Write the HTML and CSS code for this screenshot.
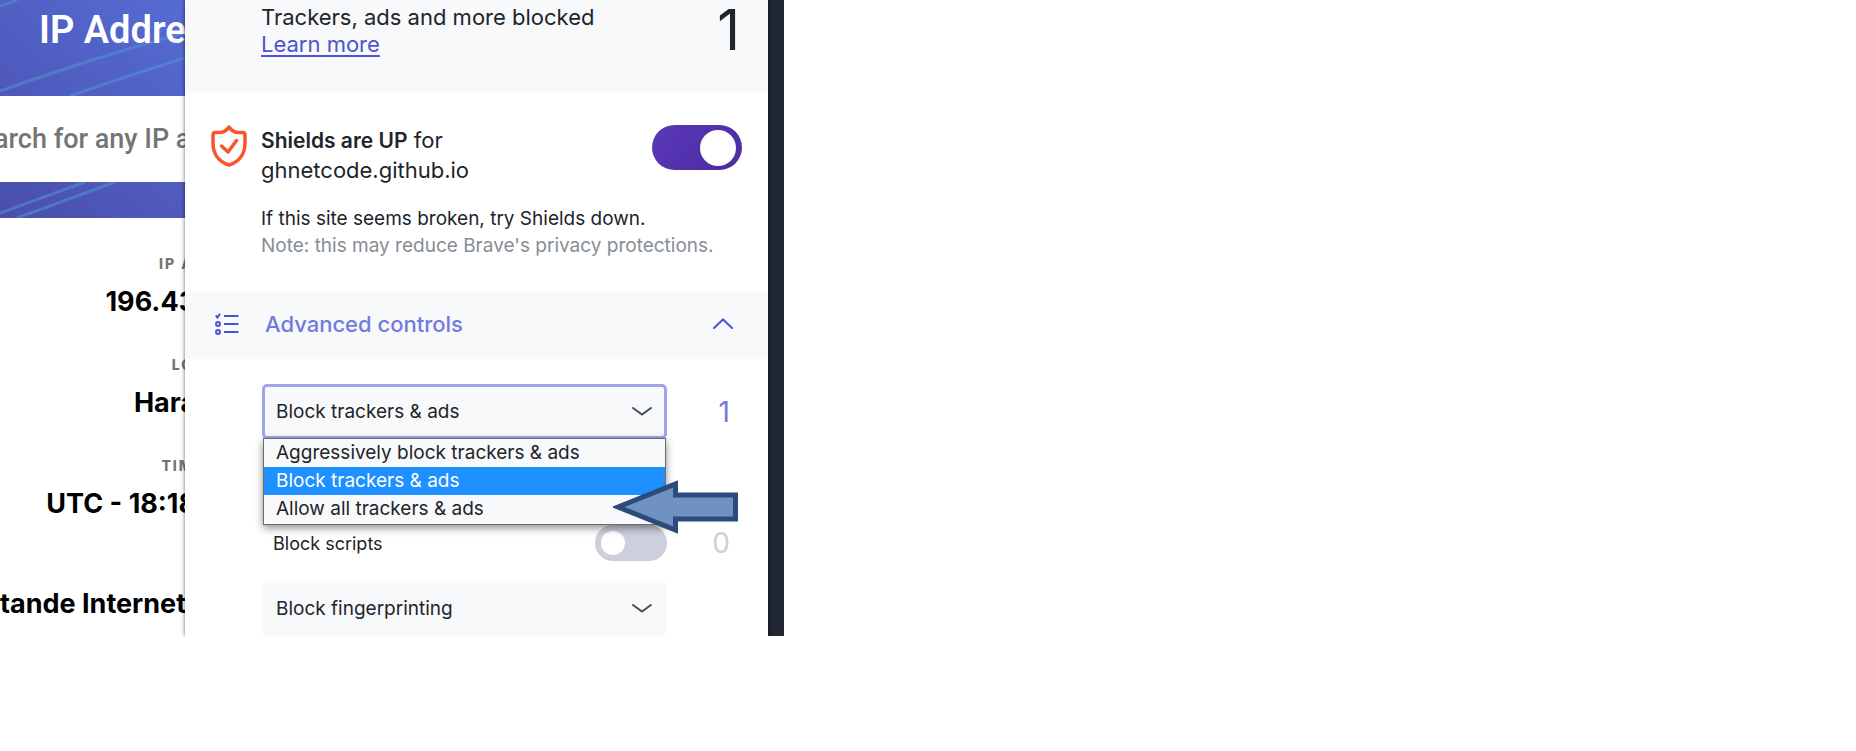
FILE: index.html
```html
<!DOCTYPE html>
<html lang="en">
<head>
<meta charset="utf-8">
<title>Shields</title>
<link rel="stylesheet" href="styles.css">
</head>
<body>
<div class="window">
  <main class="page">
    <header class="banner">
      <svg class="banner-lines" viewBox="0 0 185 218" preserveAspectRatio="none" aria-hidden="true">
        <path d="M0 6L17 0M0 91C60 70 120 50 185 33M70 96C110 82 150 69 185 58M0 213L85 182M17 218L115 182"/>
      </svg>
      <h1 class="banner-title">IP Addre</h1>
      <input class="search" type="text" placeholder="arch for any IP a" aria-label="IP search">
    </header>
    <dl class="facts">
      <div class="fact"><dt>IP A</dt><dd>196.43</dd></div>
      <div class="fact"><dt>LO</dt><dd>Hara</dd></div>
      <div class="fact"><dt>TIM</dt><dd>UTC - 18:18</dd></div>
      <div class="fact fact-plain"><dd>tande Internet</dd></div>
    </dl>
  </main>

  <aside class="panel">
    <section class="summary">
      <p class="summary-text">Trackers, ads and more blocked<br><a class="link" href="#">Learn more</a></p>
      <span class="total">1</span>
    </section>

    <section class="status">
      <svg class="shield" viewBox="0 0 36 42" aria-hidden="true">
        <path d="M18 2C16 5 12 7.500 8 7.500H4.500C3 7.500 2 8.500 2 10V18C2 29 8 37 18 40C28 37 34 29 34 18V10C34 8.500 33 7.500 31.500 7.500H28C24 7.500 20 5 18 2Z"/>
        <path d="M10.500 21L17 27L25.500 15.500"/>
      </svg>
      <label class="site" for="shields"><b>Shields are UP</b> for<br>ghnetcode.github.io</label>
      <input class="toggle toggle-large" id="shields" type="checkbox" role="switch" checked>
      <p class="hint">If this site seems broken, try Shields down.<br><span class="note">Note: this may reduce Brave's privacy protections.</span></p>
    </section>

    <button class="advanced" type="button" aria-expanded="true">
      <svg class="list-icon" viewBox="0 0 24 22" aria-hidden="true">
        <path d="M.8 2.500L2.500 4.500L5 .8M9 3H23.500M9 11H23.500M9 19H23.500"/>
        <circle cx="3" cy="11" r="2"/><circle cx="3" cy="19" r="2"/>
      </svg>
      <span class="advanced-label">Advanced controls</span>
      <svg class="collapse" viewBox="0 0 20 11" aria-hidden="true"><path d="M1 10L10 1.500L19 10"/></svg>
    </button>

    <section class="controls">
      <div class="field field-open">
        <select class="select" aria-label="Trackers and ads">
          <option>Block trackers &amp; ads</option>
        </select>
        <svg class="chevron" viewBox="0 0 20 9" aria-hidden="true"><path d="M1 1L10 7.500L19 1"/></svg>
        <ul class="menu" role="listbox" aria-label="Trackers and ads">
          <li class="option" role="option">Aggressively block trackers &amp; ads</li>
          <li class="option option-active" role="option" aria-selected="true">Block trackers &amp; ads</li>
          <li class="option" role="option">Allow all trackers &amp; ads</li>
        </ul>
        <svg class="arrow" viewBox="0 0 126 54" aria-hidden="true"><path d="M5 27L62.500 4V15H122.500V39H62.500V50Z"/></svg>
      </div>
      <span class="count">1</span>

      <div class="switch-row">
        <label for="scripts">Block scripts</label>
        <input class="toggle" id="scripts" type="checkbox" role="switch">
      </div>
      <span class="count count-off">0</span>

      <div class="field">
        <select class="select" aria-label="Fingerprinting">
          <option>Block fingerprinting</option>
        </select>
        <svg class="chevron" viewBox="0 0 20 9" aria-hidden="true"><path d="M1 1L10 7.500L19 1"/></svg>
      </div>
    </section>
  </aside>
</div>
</body>
</html>
```
FILE: styles.css
```css
* { box-sizing: border-box; }

body {
  margin: 0;
  background: #fff;
  color: #212529;
  font-family: Inter, "Open Sans", sans-serif;
}

h1, p, dl, dd, ul { margin: 0; padding: 0; }

.window {
  display: grid;
  grid-template-columns: 185fr 583fr 16px;
  max-width: 784px;
  overflow: hidden;
  background: #212733;
}

/* Page behind the panel */
.page {
  overflow: hidden;
  background: #fff;
  color: #000;
  font-family: Roboto, sans-serif;
}

.banner {
  position: relative;
  padding-bottom: 36px;
  background: linear-gradient(40deg, #4b4dac, #556dd4);
}

.banner-lines {
  position: absolute;
  inset: 0;
  width: 100%;
  height: 100%;
  fill: none;
  stroke: #4f9bd0;
  stroke-opacity: .5;
  stroke-width: 3;
}

.banner-title {
  position: relative;
  height: 96px;
  padding: 8px 0 0 39px;
  color: #fff;
  font-size: 38px;
  font-weight: 600;
  line-height: 44px;
  white-space: nowrap;
}

.search {
  position: relative;
  display: block;
  width: 100%;
  height: 86px;
  padding: 0;
  border: 0;
  background: #fff;
  font: 500 27px Roboto, sans-serif;
  text-indent: -6px;
}

.search::placeholder { color: #757575; opacity: 1; }

.facts {
  display: grid;
  gap: 37px;
  margin-right: -10px;
  padding-top: 36px;
}

.fact {
  display: grid;
  justify-content: end;
  justify-items: end;
  gap: 12px;
  white-space: nowrap;
}

.fact dt {
  padding-right: 2px;
  color: #757575;
  font: 800 14px/20px Inter, sans-serif;
  letter-spacing: 2px;
}

.fact dd {
  font: 700 27px/32px Inter, sans-serif;
}

.fact-plain { padding: 31px 10px 0 0; }

/* Shields panel */
.panel {
  position: relative;
  background: #fff;
  box-shadow: 0 0 4px rgba(0, 0, 0, .6);
}

.summary {
  display: flex;
  justify-content: space-between;
  height: 92px;
  padding: 4px 28px 0 76px;
  background: #f8f9fb;
}

.summary-text { font-size: 22px; line-height: 27px; }

.link { color: #4c54d2; text-underline-offset: 3px; text-decoration-thickness: 2px; }

.total { font-size: 56px; font-weight: 400; line-height: 52px; }

.status {
  display: grid;
  grid-template-columns: 36px 1fr auto;
  column-gap: 14px;
  align-items: start;
  padding: 33px 26px 33px 26px;
}

.shield { width: 36px; height: 42px; fill: none; stroke: #fb542b; stroke-width: 3.5; stroke-linejoin: round; stroke-linecap: round; }

.site { font-size: 22px; line-height: 30px; }
.site b { font-size: 21px; font-weight: 600; line-height: 24px; }

.hint {
  grid-column: 2 / 4;
  padding-top: 20px;
  font-size: 19px;
  line-height: 27px;
  white-space: nowrap;
}

.note { color: #868e96; }

.toggle {
  appearance: none;
  display: flex;
  align-items: center;
  width: 72px;
  height: 36px;
  margin: 0;
  padding: 6px;
  border-radius: 18px;
  background: #cdcfdc;
}

.toggle::before {
  content: "";
  width: 24px;
  height: 24px;
  border-radius: 50%;
  background: #fff;
}

.toggle-large {
  justify-content: flex-end;
  width: 90px;
  height: 45px;
  border-radius: 23px;
  background: linear-gradient(130deg, #5a38ba, #4c2c9f);
}

.toggle-large::before { width: 36px; height: 36px; }

.advanced {
  display: flex;
  align-items: center;
  width: 100%;
  height: 67px;
  padding: 0 35px 4px 30px;
  border: 0;
  background: #f8f9fb;
  color: #737ade;
  font: 500 22px/30px Inter, sans-serif;
}

.advanced-label { flex: 1; padding-left: 26px; text-align: left; }

.list-icon { width: 24px; height: 22px; fill: none; stroke: #4c54d2; stroke-width: 2; }

.collapse { width: 20px; height: 11px; fill: none; stroke: #4c54d2; stroke-width: 2; stroke-linecap: round; }

.controls {
  display: grid;
  grid-template-columns: 1fr 63px;
  align-items: center;
  padding: 25px 38px 0 77px;
}

.field { position: relative; }

.select {
  appearance: none;
  display: block;
  width: 100%;
  height: 55px;
  padding: 0 11px;
  border: 3px solid #f8f9fb;
  border-radius: 5px;
  background: #f8f9fb;
  color: #212529;
  font: 19px Inter, sans-serif;
}

.field-open .select { border-color: #a0a5eb; }

.chevron {
  position: absolute;
  top: 23px;
  right: 15px;
  width: 20px;
  height: 9px;
  fill: none;
  stroke: #495057;
  stroke-width: 2;
  stroke-linecap: round;
}

.menu {
  position: absolute;
  z-index: 1;
  top: 54px;
  left: 1px;
  right: 1px;
  padding-bottom: 1px;
  border: 1px solid #6a6a6a;
  background: #f8f9fb;
  box-shadow: 0 3px 8px rgba(0, 0, 0, .45);
  list-style: none;
}

.option { padding-left: 12px; font-size: 19px; line-height: 28px; }

.option-active { background: #1e90ff; color: #fff; }

.arrow {
  position: absolute;
  z-index: 2;
  top: 96px;
  right: -72px;
  width: 126px;
  height: 54px;
  fill: #6f92c0;
  stroke: #2c4a7c;
  stroke-width: 5;
}

.count { color: #737ade; font-size: 28px; line-height: 36px; text-align: right; }
.count-off { color: #cdcfdc; }

.switch-row {
  display: flex;
  align-items: center;
  justify-content: space-between;
  padding: 86px 0 20px 11px;
  font-size: 18px;
}

.switch-row + .count { padding-top: 66px; }
```
